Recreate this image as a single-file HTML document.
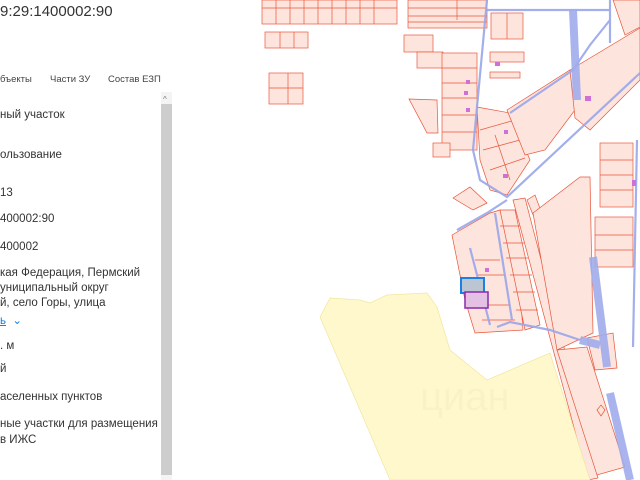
<!DOCTYPE html>
<html><head><meta charset="utf-8"><style>
*{margin:0;padding:0;box-sizing:border-box}
body{width:640px;height:480px;overflow:hidden;background:#fff;font-family:"Liberation Sans",sans-serif;color:#333;position:relative}
#panel{position:absolute;left:0;top:0;width:176px;height:480px;background:#fff;z-index:2}
.t{position:absolute;left:0;font-size:11.5px;white-space:nowrap;line-height:15px}
#map{position:absolute;left:0;top:0}
</style></head><body>
<svg id="map" width="640" height="480" viewBox="0 0 640 480">
<g fill="#fde4dc" stroke="#e8553a" stroke-width="0.7">
<rect x="262" y="0" width="135" height="24"/>
<path d="M276 0V24M290 0V24M304 0V24M318 0V24M332 0V24M346 0V24M360 0V24M374 0V24M262 8H397" fill="none"/>
<rect x="265" y="32" width="43" height="16"/><path d="M280 32V48M294 32V48" fill="none"/>
<rect x="269" y="73" width="34" height="31"/><path d="M288 73V104M269 88H303" fill="none"/>
<rect x="408" y="0" width="79" height="28"/><path d="M408 8H487M408 16H487M408 22H487M457 0V20" fill="none"/>
<rect x="404" y="35" width="29" height="17"/>
<rect x="417" y="52" width="26" height="16"/>
<rect x="442" y="53" width="35" height="97"/><path d="M442 68H477M442 83H477M442 98H477M442 115H477M442 132H477" fill="none"/>
<path d="M409 99L437 100L438 133L427 133Z"/>
<rect x="433" y="143" width="17" height="14"/>
<rect x="491" y="13" width="32" height="26"/><path d="M507 13V39" fill="none"/>
<rect x="490" y="52" width="34" height="10"/><rect x="490" y="72" width="30" height="6"/>
<path d="M477 107L510 113L530 160L507 195L490 190L480 160Z"/><path d="M480 130L515 120M483 150L520 140M490 170L525 158M495 135L510 180" fill="none"/>
<path d="M507 110L570 70L590 90L545 150L525 155Z"/>
<path d="M570 70L640 28L640 80L590 130L575 118Z"/>
<path d="M613 0L640 0L640 27L625 35Z"/>
<rect x="600" y="143" width="33" height="64"/><path d="M600 160H633M600 175H633M600 190H633" fill="none"/>
<rect x="595" y="217" width="38" height="50"/><path d="M595 235H633M595 250H633" fill="none"/>
<path d="M453 198L470 187L487 203L473 210Z"/>
<path d="M452 235L490 213L500 210L520 290L523 330L475 333L465 300Z"/>
<path d="M500 210L515 210L540 325L525 330Z"/><path d="M500 226H520M503 243H524M506 258H528M510 275H532M513 292H535M516 310H538" fill="none"/>
<path d="M475 260H500M478 275H505M480 305H510M482 320H515" fill="none"/>
<path d="M513 200L525 198L598 478L588 480Z"/>
<path d="M527 200L535 195L548 230L540 232Z"/>
<path d="M533 213L580 177L590 177L593 333L557 350Z"/>
<path d="M557 350L587 347L625 467L597 475Z"/>
<path d="M587 338L613 333L617 368L595 370Z"/>
<path d="M597 410l4-5 4 5-4 6z" fill="none"/>
</g>
<path d="M320 317L330 298L360 300L370 303L387 295L427 293L437 307L450 350L487 380L550 353L590 480L390 480Z" fill="#fef8cc" stroke="#f0e6a0" stroke-width="0.7"/>
<g fill="none" stroke="#9aa7ea" stroke-width="2.2" opacity="0.9">
<path d="M487 0L473 150L480 180L507 197L640 73"/>
<path d="M487 10H610M610 0V43"/>
<path d="M510 113L573 70L590 45L610 20"/>
<path d="M457 230L487 213L507 200"/>
<path d="M497 327L510 322L550 330L580 340"/>
<path d="M637 140L633 347"/>
<path d="M495 213L512 320"/>
<path d="M470 248L490 325"/>
</g>
<g fill="none" stroke="#a0acec" stroke-width="8" opacity="0.9">
<path d="M573 10L577 100"/>
<path d="M593 257L607 367"/>
<path d="M610 393L630 480"/>
<path d="M580 340L600 345"/>
</g>
<g fill="#d06fd8"><rect x="495" y="62" width="5" height="4"/><rect x="466" y="80" width="4" height="4"/><rect x="464" y="91" width="4" height="4"/><rect x="466" y="108" width="4" height="4"/><rect x="504" y="130" width="4" height="4"/><rect x="503" y="174" width="5" height="4"/><rect x="585" y="96" width="6" height="5"/><rect x="485" y="268" width="4" height="4"/><rect x="632" y="180" width="4" height="6"/></g>
<rect x="461" y="278" width="23" height="15" fill="#bcc6d2" stroke="#1a80e6" stroke-width="2"/>
<rect x="465" y="292" width="23" height="16" fill="#e4c0e4" stroke="#8a2aa8" stroke-width="1.5"/>
<text x="420" y="410" font-family="Liberation Sans" font-size="40" fill="#000" opacity="0.02">циан</text>
</svg>
<div id="panel">
<div class="t" style="top:3px;font-size:15px;line-height:18px;color:#333">9:29:1400002:90</div>
<div class="t" style="top:72px;font-size:9.5px;color:#444">бъекты</div>
<div class="t" style="top:72px;left:50px;font-size:9.5px;color:#444">Части ЗУ</div>
<div class="t" style="top:72px;left:108px;font-size:9.5px;color:#444">Состав ЕЗП</div>
<div style="position:absolute;left:161px;top:92px;width:11px;height:388px;background:#f4f4f4"></div>
<div style="position:absolute;left:161px;top:104px;width:11px;height:371px;background:#cdcdcd"></div>
<div class="t" style="top:92px;left:163px;font-size:8px;color:#777">^</div>
<div class="t" style="top:108px">ный участок</div>
<div class="t" style="top:148px">ользование</div>
<div class="t" style="top:186px">13</div>
<div class="t" style="top:212px">400002:90</div>
<div class="t" style="top:240px">400002</div>
<div class="t" style="top:266px">кая Федерация, Пермский</div>
<div class="t" style="top:281px">униципальный округ</div>
<div class="t" style="top:296px">й, село Горы, улица</div>
<div class="t" style="top:314px;color:#1a7fe0"><u>ь</u>&nbsp;&nbsp;⌄</div>
<div class="t" style="top:339px">. м</div>
<div class="t" style="top:362px">й</div>
<div class="t" style="top:390px">аселенных пунктов</div>
<div class="t" style="top:417px">ные участки для размещения</div>
<div class="t" style="top:433px">в ИЖС</div>
</div>
</body></html>
